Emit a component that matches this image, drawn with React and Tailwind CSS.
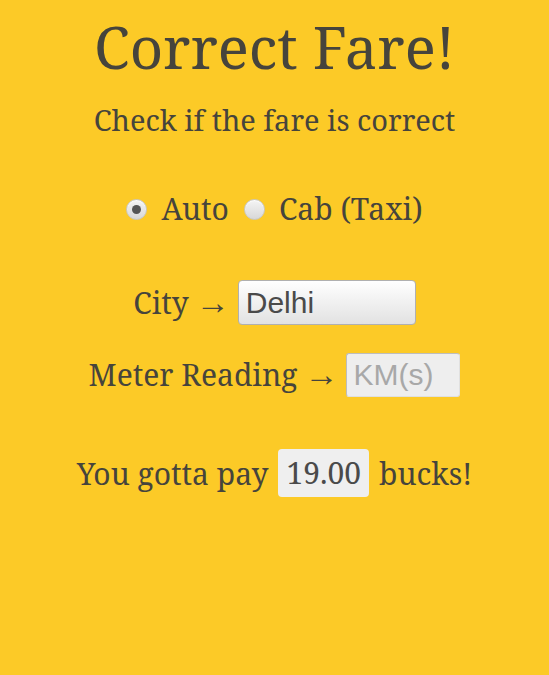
import React from 'react'

const serif = 'font-["Noto_Serif","DejaVu_Serif",serif]'

function Radio({ checked }) {
  return (
    <span className="w-[21px] h-[21px] rounded-full border border-[#c8c8c8] bg-gradient-to-b from-[#f4f4f4] to-[#d8d8d8] flex items-center justify-center shadow-[inset_0_1px_1px_rgba(255,255,255,0.8)]">
      {checked && <span className="w-[9px] h-[9px] rounded-full bg-[#555]" />}
    </span>
  )
}

function Arrow() {
  return <span className='font-["Liberation_Serif","DejaVu_Serif",serif] text-[34px] leading-none'>→</span>
}

export default function App() {
  return (
    <div className={`min-h-[675px] bg-[#fcca27] text-[#46443c] text-center ${serif}`}>
      <h1 className="pt-[12px] text-[58px] leading-[70px]">Correct Fare!</h1>
      <p className="mt-[18px] text-[29px] leading-[40px]">Check if the fare is correct</p>

      <div className="mt-[49px] flex items-center justify-center gap-[15px] text-[30px] leading-[40px]">
        <label className="flex items-center gap-[14px]">
          <Radio checked />
          Auto
        </label>
        <label className="flex items-center gap-[14px]">
          <Radio />
          Cab (Taxi)
        </label>
      </div>

      <div className="mt-[51px] flex items-center justify-center gap-[8px] text-[30px] leading-[45px]">
        <span className="flex items-center gap-[7px]">City <Arrow /></span>
        <div className='w-[178px] h-[45px] px-[7px] rounded-[4px] border border-[#b0b0b0] bg-gradient-to-b from-white to-[#e2e2e2] text-[#4a4a4a] font-["Liberation_Sans",sans-serif] text-[30px] leading-[43px] text-left'>
          Delhi
        </div>
      </div>

      <div className="mt-[28px] flex items-center justify-center gap-[8px] text-[30px] leading-[44px]">
        <span className="flex items-center gap-[7px]">Meter Reading <Arrow /></span>
        <input
          placeholder="KM(s)"
          className='w-[114px] h-[44px] px-[6px] rounded-[3px] border border-[#bdbdbd] border-r-[#e0e0e0] border-b-[#e0e0e0] bg-[#eeeeee] text-[#444] placeholder:text-[#a8a8a8] font-["Liberation_Sans",sans-serif] text-[30px] outline-none'
        />
      </div>

      <div className="mt-[52px] flex items-center justify-center gap-[10px] text-[30px]">
        <span>You gotta pay</span>
        <span className="px-[8px] h-[48px] leading-[48px] rounded-[4px] bg-[#efefef] text-[#4a4a4a]">19.00</span>
        <span>bucks!</span>
      </div>
    </div>
  )
}
